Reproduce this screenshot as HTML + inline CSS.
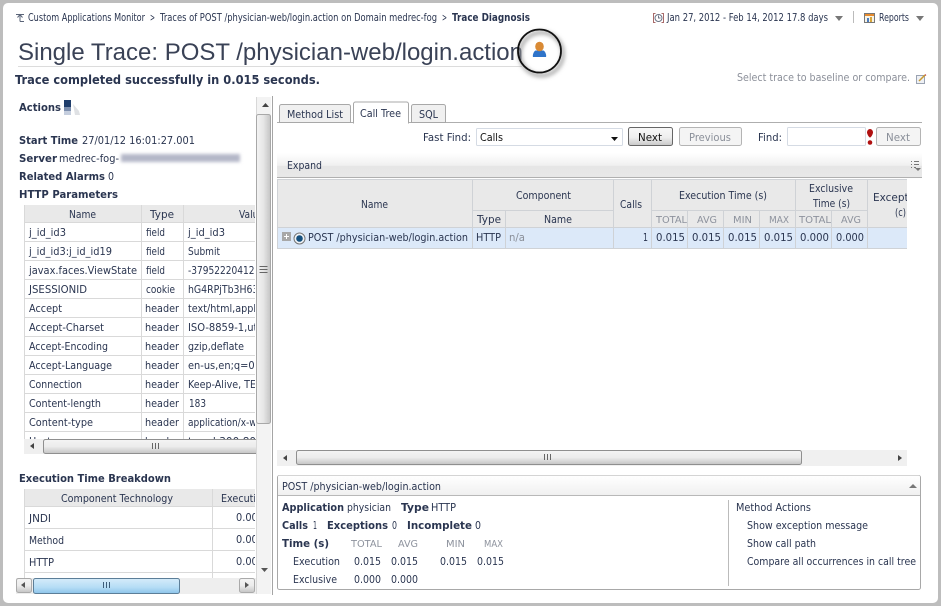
<!DOCTYPE html>
<html><head><meta charset="utf-8"><style>
html,body{margin:0;padding:0;background:#bdbdbd;overflow:hidden}
svg{display:block}
text{font-family:"DejaVu Sans","Liberation Sans",sans-serif;font-size:11px;fill:#2a3550;white-space:pre}
.b{font-weight:bold}
.s{font-size:10px;fill:#8d929d}
.g{fill:#8a8f99}
.c{font-size:10.5px}
</style></head><body>
<svg width="941" height="606" viewBox="0 0 941 606" xmlns="http://www.w3.org/2000/svg">
<defs>
<linearGradient id="bar" x1="0" y1="0" x2="0" y2="1"><stop offset="0" stop-color="#fff"/><stop offset=".5" stop-color="#f0f0f0"/><stop offset=".52" stop-color="#e6e6e6"/><stop offset="1" stop-color="#e8e8e8"/></linearGradient>
<linearGradient id="th" x1="0" y1="0" x2="0" y2="1"><stop offset="0" stop-color="#f4f4f4"/><stop offset=".5" stop-color="#ececec"/><stop offset="1" stop-color="#c4c4c4"/></linearGradient>
<linearGradient id="thv" x1="0" y1="0" x2="1" y2="0"><stop offset="0" stop-color="#f4f4f4"/><stop offset=".5" stop-color="#e6e6e6"/><stop offset="1" stop-color="#c4c4c4"/></linearGradient>
<linearGradient id="blue" x1="0" y1="0" x2="0" y2="1"><stop offset="0" stop-color="#d6ecfa"/><stop offset=".6" stop-color="#b4dcf5"/><stop offset="1" stop-color="#8cc4ea"/></linearGradient>
<linearGradient id="btn" x1="0" y1="0" x2="0" y2="1"><stop offset="0" stop-color="#f8f8f8"/><stop offset=".55" stop-color="#eee"/><stop offset="1" stop-color="#c8c8c8"/></linearGradient>
<linearGradient id="pan" x1="0" y1="0" x2="0" y2="1"><stop offset="0" stop-color="#fff"/><stop offset="1" stop-color="#f0f0f0"/></linearGradient>
<clipPath id="c1"><rect x="24" y="205" width="231" height="234"/></clipPath>
<clipPath id="c2"><rect x="24" y="489" width="231" height="89"/></clipPath>
<clipPath id="c3"><rect x="277" y="179" width="630" height="70"/></clipPath>
<filter id="bl" x="-10%" y="-50%" width="120%" height="200%"><feGaussianBlur stdDeviation="1.6"/></filter>
<filter id="sh" x="-30%" y="-30%" width="160%" height="160%"><feGaussianBlur stdDeviation="2.2"/></filter>
</defs>

<rect width="941" height="606" fill="#bdbdbd"/>
<rect x="3" y="3" width="935" height="600" rx="5" fill="#fff"/>

<!-- breadcrumb -->
<g stroke="#5a6478" fill="none" stroke-width="1"><path d="M16 14.5h8M20 14.5v7M17.5 17.5l2.5-3 2.5 3M20 21.5h4"/></g>
<text x="28" y="21" textLength="117" lengthAdjust="spacingAndGlyphs" class="c">Custom Applications Monitor</text>
<text x="150" y="21" textLength="5" lengthAdjust="spacingAndGlyphs" class="c">&gt;</text>
<text x="160" y="21" textLength="277" lengthAdjust="spacingAndGlyphs" class="c">Traces of POST /physician-web/login.action on Domain medrec-fog</text>
<text x="442" y="21" textLength="5" lengthAdjust="spacingAndGlyphs" class="c">&gt;</text>
<text x="452" y="21" textLength="78" lengthAdjust="spacingAndGlyphs" class="c b">Trace Diagnosis</text>

<!-- date / reports -->
<g fill="none" stroke-width="1"><path d="M655.5 13.5h-2v9h2M661.500 13.500h2v9h-2" stroke="#a86a6a"/><circle cx="658.500" cy="18" r="3.500" stroke="#6b7385"/><path d="M658.500 15.500v2.500h2" stroke="#6b7385"/></g>
<text x="667" y="21" textLength="161" lengthAdjust="spacingAndGlyphs">Jan 27, 2012 - Feb 14, 2012 17.8 days</text>
<path d="M835 16h8l-4 5z" fill="#777"/>
<rect x="853" y="11" width="1" height="12" fill="#bbb"/>
<rect x="864.500" y="13.500" width="10" height="9" fill="#f7f3e6" stroke="#777"/><rect x="865" y="14" width="9" height="2" fill="#e58a2e"/><rect x="867" y="18" width="2" height="4" fill="#4a7cc0"/><rect x="870" y="17" width="2" height="5" fill="#d9a63a"/>
<text x="879" y="21" textLength="30" lengthAdjust="spacingAndGlyphs">Reports</text>
<path d="M916 16h8l-4 5z" fill="#777"/>

<!-- title -->
<text x="18" y="60" textLength="505" lengthAdjust="spacingAndGlyphs" style="font-family:'Liberation Sans',sans-serif;font-size:24px;fill:#3a4256">Single Trace: POST /physician-web/login.action</text>
<rect x="18" y="66" width="504" height="1" fill="#dcdcdc"/>

<!-- circle highlight -->
<circle cx="541.500" cy="54" r="21.500" fill="none" stroke="#999" stroke-width="3" filter="url(#sh)"/>
<circle cx="539.500" cy="51" r="21.500" fill="none" stroke="#111" stroke-width="1.800"/>
<path d="M533 57c-.5-1 0-5 2.500-6.500h8c2.500 1.500 3 5.500 2.500 6.500z" fill="#2f74c9"/>
<ellipse cx="539.500" cy="46.500" rx="4.300" ry="4.800" fill="#d98a35"/>

<text x="15" y="84" textLength="305" lengthAdjust="spacingAndGlyphs" class="b" style="font-size:12.500px">Trace completed successfully in 0.015 seconds.</text>
<text x="737" y="81" textLength="173" lengthAdjust="spacingAndGlyphs" style="fill:#8b8f99">Select trace to baseline or compare.</text>
<rect x="916.500" y="75.500" width="8" height="8" fill="#eef0f4" stroke="#9aa3b2"/><path d="M919 81l6-6" stroke="#c99b2e" stroke-width="1.500"/><path d="M925 74.500l1 1" stroke="#b33" stroke-width="1"/>

<!-- left -->
<text x="19" y="111" textLength="42" lengthAdjust="spacingAndGlyphs" class="b">Actions</text>
<rect x="64" y="100" width="7" height="7" fill="#1f3d6b"/><rect x="64" y="107" width="7" height="4" fill="#7d8fae"/><rect x="64" y="111" width="7" height="4" fill="#c5cede"/><path d="M73 104l6 7 1 4h-5z" fill="#dfe1e4"/>

<text x="19" y="144" textLength="59" lengthAdjust="spacingAndGlyphs" class="b">Start Time</text>
<text x="82" y="144" textLength="113" lengthAdjust="spacingAndGlyphs">27/01/12 16:01:27.001</text>
<text x="19" y="162" textLength="38" lengthAdjust="spacingAndGlyphs" class="b">Server</text>
<text x="59" y="162" textLength="60" lengthAdjust="spacingAndGlyphs">medrec-fog-</text>
<rect x="121" y="154" width="119" height="8" fill="#b4b7c8" filter="url(#bl)"/>
<text x="19" y="180" textLength="86" lengthAdjust="spacingAndGlyphs" class="b">Related Alarms</text>
<text x="108" y="180" textLength="6" lengthAdjust="spacingAndGlyphs">0</text>
<text x="19" y="198" textLength="99" lengthAdjust="spacingAndGlyphs" class="b">HTTP Parameters</text>

<!-- table 1 -->
<g clip-path="url(#c1)">
<rect x="24" y="205" width="231" height="17" fill="#e9e9e9"/>
<g fill="#d9d9d9">
<rect x="24" y="222" width="231" height="1"/><rect x="24" y="241" width="231" height="1"/><rect x="24" y="260" width="231" height="1"/><rect x="24" y="279" width="231" height="1"/><rect x="24" y="298" width="231" height="1"/><rect x="24" y="317" width="231" height="1"/><rect x="24" y="336" width="231" height="1"/><rect x="24" y="355" width="231" height="1"/><rect x="24" y="374" width="231" height="1"/><rect x="24" y="393" width="231" height="1"/><rect x="24" y="412" width="231" height="1"/><rect x="24" y="431" width="231" height="1"/>
<rect x="24" y="205" width="1" height="234"/><rect x="141" y="205" width="1" height="234"/><rect x="183" y="205" width="1" height="234"/>
</g>
<text x="69" y="218" textLength="27" lengthAdjust="spacingAndGlyphs">Name</text><text x="150" y="218" textLength="24" lengthAdjust="spacingAndGlyphs">Type</text><text x="239" y="218" textLength="25" lengthAdjust="spacingAndGlyphs">Value</text>

<text x="29" y="236" textLength="37" lengthAdjust="spacingAndGlyphs">j_id_id3</text><text x="146" y="236" textLength="19" lengthAdjust="spacingAndGlyphs">field</text><text x="188" y="236" textLength="37" lengthAdjust="spacingAndGlyphs">j_id_id3</text>
<text x="29" y="255" textLength="83" lengthAdjust="spacingAndGlyphs">j_id_id3:j_id_id19</text><text x="146" y="255" textLength="19" lengthAdjust="spacingAndGlyphs">field</text><text x="188" y="255" textLength="32" lengthAdjust="spacingAndGlyphs">Submit</text>
<text x="29" y="274" textLength="108" lengthAdjust="spacingAndGlyphs">javax.faces.ViewState</text><text x="146" y="274" textLength="19" lengthAdjust="spacingAndGlyphs">field</text><text x="188" y="274" textLength="78" lengthAdjust="spacingAndGlyphs">-3795222041234</text>
<text x="29" y="293" textLength="58" lengthAdjust="spacingAndGlyphs">JSESSIONID</text><text x="146" y="293" textLength="29" lengthAdjust="spacingAndGlyphs">cookie</text><text x="188" y="293" textLength="76" lengthAdjust="spacingAndGlyphs">hG4RPjTb3H63x</text>
<text x="29" y="312" textLength="33" lengthAdjust="spacingAndGlyphs">Accept</text><text x="145" y="312" textLength="34" lengthAdjust="spacingAndGlyphs">header</text><text x="188" y="312" textLength="76" lengthAdjust="spacingAndGlyphs">text/html,applic</text>
<text x="29" y="331" textLength="75" lengthAdjust="spacingAndGlyphs">Accept-Charset</text><text x="145" y="331" textLength="34" lengthAdjust="spacingAndGlyphs">header</text><text x="188" y="331" textLength="76" lengthAdjust="spacingAndGlyphs">ISO-8859-1,utf-</text>
<text x="29" y="350" textLength="79" lengthAdjust="spacingAndGlyphs">Accept-Encoding</text><text x="145" y="350" textLength="34" lengthAdjust="spacingAndGlyphs">header</text><text x="188" y="350" textLength="56" lengthAdjust="spacingAndGlyphs">gzip,deflate</text>
<text x="29" y="369" textLength="83" lengthAdjust="spacingAndGlyphs">Accept-Language</text><text x="145" y="369" textLength="34" lengthAdjust="spacingAndGlyphs">header</text><text x="188" y="369" textLength="76" lengthAdjust="spacingAndGlyphs">en-us,en;q=0.5</text>
<text x="29" y="388" textLength="53" lengthAdjust="spacingAndGlyphs">Connection</text><text x="145" y="388" textLength="34" lengthAdjust="spacingAndGlyphs">header</text><text x="188" y="388" textLength="68" lengthAdjust="spacingAndGlyphs">Keep-Alive, TE</text>
<text x="29" y="407" textLength="72" lengthAdjust="spacingAndGlyphs">Content-length</text><text x="145" y="407" textLength="34" lengthAdjust="spacingAndGlyphs">header</text><text x="189" y="407" textLength="17" lengthAdjust="spacingAndGlyphs">183</text>
<text x="29" y="426" textLength="64" lengthAdjust="spacingAndGlyphs">Content-type</text><text x="145" y="426" textLength="34" lengthAdjust="spacingAndGlyphs">header</text><text x="188" y="426" textLength="76" lengthAdjust="spacingAndGlyphs">application/x-ww</text>
<text x="29" y="445" textLength="22" lengthAdjust="spacingAndGlyphs">Host</text><text x="145" y="445" textLength="34" lengthAdjust="spacingAndGlyphs">header</text><text x="188" y="445" textLength="68" lengthAdjust="spacingAndGlyphs">trend:300:80</text>
</g>
<!-- table 1 h scrollbar -->
<rect x="24" y="439" width="231" height="15" fill="#efefef"/>
<path d="M34 443v6l-4-3z" fill="#444"/>
<rect x="43.500" y="439.500" width="225" height="14" rx="2" fill="url(#th)" stroke="#8f8f8f"/>
<path d="M152.500 443v6M155.500 443v6M158.500 443v6" stroke="#666"/>

<text x="19" y="482" textLength="152" lengthAdjust="spacingAndGlyphs" class="b">Execution Time Breakdown</text>

<!-- table 2 -->
<g clip-path="url(#c2)">
<rect x="24" y="489" width="231" height="17" fill="#e9e9e9"/>
<g fill="#d9d9d9"><rect x="24" y="506" width="231" height="1"/><rect x="24" y="528" width="231" height="1"/><rect x="24" y="550" width="231" height="1"/><rect x="24" y="572" width="231" height="1"/><rect x="24" y="489" width="1" height="89"/><rect x="212" y="489" width="1" height="89"/></g>
<text x="61" y="502" textLength="112" lengthAdjust="spacingAndGlyphs">Component Technology</text>
<text x="221" y="502" textLength="47" lengthAdjust="spacingAndGlyphs">Execution</text>
<text x="29" y="522" textLength="22" lengthAdjust="spacingAndGlyphs">JNDI</text><text x="236" y="521" textLength="28" lengthAdjust="spacingAndGlyphs">0.000</text>
<text x="29" y="544" textLength="35" lengthAdjust="spacingAndGlyphs">Method</text><text x="236" y="543" textLength="28" lengthAdjust="spacingAndGlyphs">0.000</text>
<text x="29" y="566" textLength="25" lengthAdjust="spacingAndGlyphs">HTTP</text><text x="236" y="565" textLength="28" lengthAdjust="spacingAndGlyphs">0.000</text>
</g>

<!-- left v scrollbar -->
<rect x="256" y="97" width="15" height="497" fill="#f3f3f3"/>
<rect x="256" y="97" width="1" height="497" fill="#d8d8d8"/>
<path d="M262 107h7l-3.500-4z" fill="#444"/>
<rect x="256.500" y="114.500" width="14" height="309" rx="2" fill="url(#thv)" stroke="#a8a8a8"/>
<path d="M259.500 266.500h8M259.500 269.500h8M259.500 272.500h8" stroke="#666"/>
<path d="M261 568h7l-3.500 4z" fill="#555"/>

<!-- left h scrollbar -->
<rect x="16" y="578" width="240" height="16" fill="#eee"/>
<rect x="16.500" y="578.500" width="15" height="14" rx="2" fill="url(#th)" stroke="#aaa"/><path d="M25 582v6l-4-3z" fill="#555"/>
<rect x="33.500" y="578.500" width="146" height="15" rx="2" fill="url(#blue)" stroke="#5c7e98"/>
<path d="M103.500 582v6M106.500 582v6M109.500 582v6" stroke="#3d5c78"/>
<rect x="239.500" y="578.500" width="15" height="14" rx="2" fill="url(#th)" stroke="#aaa"/><path d="M245 582v6l4-3z" fill="#555"/>

<!-- splitter -->
<rect x="272" y="96" width="1" height="499" fill="#a5a5a5"/>

<!-- tabs -->
<rect x="277" y="122" width="645" height="1" fill="#aeaeae"/>
<path d="M279.500 122.500v-16a2 2 0 0 1 2-2h67a2 2 0 0 1 2 2v16z" fill="#f0f0f0" stroke="#a8a8a8"/>
<path d="M411.500 122.500v-16a2 2 0 0 1 2-2h30a2 2 0 0 1 2 2v16z" fill="#f0f0f0" stroke="#a8a8a8"/>
<path d="M353.500 123v-19a2 2 0 0 1 2-2h51a2 2 0 0 1 2 2v19z" fill="#fff" stroke="#a8a8a8"/>
<rect x="354" y="122" width="54" height="2" fill="#fff"/>
<text x="287" y="118" textLength="56" lengthAdjust="spacingAndGlyphs">Method List</text>
<text x="360" y="117" textLength="41" lengthAdjust="spacingAndGlyphs">Call Tree</text>
<text x="419" y="118" textLength="19" lengthAdjust="spacingAndGlyphs">SQL</text>

<!-- find bar -->
<text x="423" y="141" textLength="48" lengthAdjust="spacingAndGlyphs">Fast Find:</text>
<rect x="476.500" y="128.500" width="146" height="17" rx="1" fill="#fff" stroke="#d5dbe4"/>
<text x="480" y="141" textLength="23" lengthAdjust="spacingAndGlyphs" style="fill:#111">Calls</text>
<path d="M611 137h7l-3.500 4z" fill="#111"/>
<rect x="628.500" y="127.500" width="44" height="18" rx="2" fill="url(#btn)" stroke="#666"/>
<text x="638" y="141" textLength="24" lengthAdjust="spacingAndGlyphs" style="fill:#111">Next</text>
<rect x="679.500" y="127.500" width="62" height="18" rx="2" fill="#f4f4f4" stroke="#b4b4b4"/>
<text x="689" y="141" textLength="42" lengthAdjust="spacingAndGlyphs" class="g">Previous</text>
<text x="758" y="141" textLength="24" lengthAdjust="spacingAndGlyphs">Find:</text>
<rect x="787.500" y="127.500" width="78" height="18" rx="1" fill="#fff" stroke="#d5dbe4"/>
<path d="M870 129c2 0 3 2 3 3.500s-2 5-3 5-3-3.500-3-5 1-3.500 3-3.500z" fill="#b01010"/><circle cx="870" cy="142.500" r="2.300" fill="#b01010"/>
<rect x="876.500" y="127.500" width="44" height="18" rx="2" fill="#f4f4f4" stroke="#b4b4b4"/>
<text x="886" y="141" textLength="24" lengthAdjust="spacingAndGlyphs" class="g">Next</text>

<!-- expand bar -->
<rect x="277" y="153" width="645" height="25" fill="url(#bar)"/>
<rect x="277" y="177" width="645" height="1" fill="#b0b0b0"/>
<text x="287" y="169" textLength="35" lengthAdjust="spacingAndGlyphs">Expand</text>
<path d="M911 161.500h1M914 161.500h5M911 164.500h1M914 164.500h5M911 167.500h1M914 167.500h2" stroke="#777"/><path d="M915 168h6l-3 3z" fill="#777"/>

<!-- main table -->
<g clip-path="url(#c3)">
<rect x="277" y="179" width="630" height="49" fill="#e9e9e9"/>
<rect x="277" y="228" width="630" height="20" fill="#dce9f9"/>
<g fill="#cfd2d6">
<rect x="277" y="179" width="630" height="1"/>
<rect x="472" y="210" width="141" height="1"/><rect x="651" y="210" width="216" height="1"/>
<rect x="277" y="227" width="630" height="1"/><rect x="277" y="248" width="630" height="1"/>
<rect x="277" y="179" width="1" height="70"/><rect x="472" y="179" width="1" height="70"/><rect x="505" y="210" width="1" height="39"/><rect x="613" y="179" width="1" height="70"/><rect x="651" y="179" width="1" height="70"/><rect x="687" y="210" width="1" height="39"/><rect x="723" y="210" width="1" height="39"/><rect x="759" y="210" width="1" height="39"/><rect x="795" y="179" width="1" height="70"/><rect x="831" y="210" width="1" height="39"/><rect x="867" y="179" width="1" height="70"/>
</g>
<text x="361" y="208" textLength="27" lengthAdjust="spacingAndGlyphs">Name</text>
<text x="516" y="199" textLength="55" lengthAdjust="spacingAndGlyphs">Component</text>
<text x="477" y="223" textLength="24" lengthAdjust="spacingAndGlyphs">Type</text>
<text x="544" y="223" textLength="28" lengthAdjust="spacingAndGlyphs">Name</text>
<text x="620" y="208" textLength="22" lengthAdjust="spacingAndGlyphs">Calls</text>
<text x="679" y="199" textLength="88" lengthAdjust="spacingAndGlyphs">Execution Time (s)</text>
<text x="809" y="192" textLength="44" lengthAdjust="spacingAndGlyphs">Exclusive</text>
<text x="813" y="207" textLength="37" lengthAdjust="spacingAndGlyphs">Time (s)</text>
<text x="873" y="201" textLength="57" lengthAdjust="spacingAndGlyphs">Exceptions</text>
<text x="895" y="216" textLength="11" lengthAdjust="spacingAndGlyphs">(c)</text>
<text x="656" y="223" textLength="31" lengthAdjust="spacingAndGlyphs" class="s">TOTAL</text>
<text x="697" y="223" textLength="20" lengthAdjust="spacingAndGlyphs" class="s">AVG</text>
<text x="733" y="223" textLength="19" lengthAdjust="spacingAndGlyphs" class="s">MIN</text>
<text x="769" y="223" textLength="20" lengthAdjust="spacingAndGlyphs" class="s">MAX</text>
<text x="799" y="223" textLength="32" lengthAdjust="spacingAndGlyphs" class="s">TOTAL</text>
<text x="841" y="223" textLength="20" lengthAdjust="spacingAndGlyphs" class="s">AVG</text>

<rect x="282" y="232" width="9" height="9" fill="#a8a8a8"/><path d="M284 236.500h5M286.500 234v5" stroke="#fff"/>
<circle cx="299.500" cy="238.500" r="5.500" fill="#eef2f6" stroke="#777"/><circle cx="299.500" cy="238.500" r="3.300" fill="#14507f"/>
<text x="308" y="241" textLength="160" lengthAdjust="spacingAndGlyphs">POST /physician-web/login.action</text>
<text x="476" y="241" textLength="25" lengthAdjust="spacingAndGlyphs">HTTP</text>
<text x="509" y="241" textLength="16" lengthAdjust="spacingAndGlyphs" class="g">n/a</text>
<text x="643" y="241" textLength="5" lengthAdjust="spacingAndGlyphs">1</text>
<text x="656" y="241" textLength="29" lengthAdjust="spacingAndGlyphs">0.015</text>
<text x="692" y="241" textLength="29" lengthAdjust="spacingAndGlyphs">0.015</text>
<text x="728" y="241" textLength="29" lengthAdjust="spacingAndGlyphs">0.015</text>
<text x="764" y="241" textLength="29" lengthAdjust="spacingAndGlyphs">0.015</text>
<text x="800" y="241" textLength="29" lengthAdjust="spacingAndGlyphs">0.000</text>
<text x="836" y="241" textLength="28" lengthAdjust="spacingAndGlyphs">0.000</text>
</g>

<!-- main h scrollbar -->
<rect x="277" y="450" width="630" height="16" fill="#f0f0f0"/>
<path d="M287 455v6l-4-3z" fill="#444"/>
<rect x="296.500" y="450.500" width="505" height="14" rx="2" fill="url(#th)" stroke="#8f8f8f"/>
<path d="M544.500 454v6M547.500 454v6M550.500 454v6" stroke="#666"/>
<path d="M898 455v6l4-3z" fill="#444"/>

<!-- bottom panel -->
<rect x="277.500" y="475.500" width="643" height="114" rx="2" fill="#fff" stroke="#a8a8a8"/>
<path d="M278 495v-18a1.500 1.500 0 0 1 1.500-1.500h639a1.500 1.500 0 0 1 1.500 1.500v18z" fill="url(#pan)"/>
<rect x="278" y="495" width="642" height="1" fill="#b8b8b8"/>
<text x="282" y="490" textLength="159" lengthAdjust="spacingAndGlyphs">POST /physician-web/login.action</text>
<path d="M909 488h8l-4-4z" fill="#777"/>
<text x="282" y="511" textLength="62" lengthAdjust="spacingAndGlyphs" class="b">Application</text>
<text x="347" y="511" textLength="44" lengthAdjust="spacingAndGlyphs">physician</text>
<text x="401" y="511" textLength="28" lengthAdjust="spacingAndGlyphs" class="b">Type</text>
<text x="431" y="511" textLength="25" lengthAdjust="spacingAndGlyphs">HTTP</text>
<text x="282" y="529" textLength="26" lengthAdjust="spacingAndGlyphs" class="b">Calls</text>
<text x="313" y="529" textLength="4" lengthAdjust="spacingAndGlyphs">1</text>
<text x="327" y="529" textLength="61" lengthAdjust="spacingAndGlyphs" class="b">Exceptions</text>
<text x="392" y="529" textLength="5" lengthAdjust="spacingAndGlyphs">0</text>
<text x="407" y="529" textLength="65" lengthAdjust="spacingAndGlyphs" class="b">Incomplete</text>
<text x="475" y="529" textLength="6" lengthAdjust="spacingAndGlyphs">0</text>
<text x="282" y="547" textLength="47" lengthAdjust="spacingAndGlyphs" class="b">Time (s)</text>
<text x="351" y="547" textLength="31" lengthAdjust="spacingAndGlyphs" class="s">TOTAL</text>
<text x="398" y="547" textLength="20" lengthAdjust="spacingAndGlyphs" class="s">AVG</text>
<text x="446" y="547" textLength="19" lengthAdjust="spacingAndGlyphs" class="s">MIN</text>
<text x="484" y="547" textLength="19" lengthAdjust="spacingAndGlyphs" class="s">MAX</text>
<text x="293" y="565" textLength="47" lengthAdjust="spacingAndGlyphs">Execution</text>
<text x="354" y="565" textLength="27" lengthAdjust="spacingAndGlyphs">0.015</text>
<text x="391" y="565" textLength="27" lengthAdjust="spacingAndGlyphs">0.015</text>
<text x="440" y="565" textLength="27" lengthAdjust="spacingAndGlyphs">0.015</text>
<text x="477" y="565" textLength="27" lengthAdjust="spacingAndGlyphs">0.015</text>
<text x="293" y="583" textLength="44" lengthAdjust="spacingAndGlyphs">Exclusive</text>
<text x="354" y="583" textLength="27" lengthAdjust="spacingAndGlyphs">0.000</text>
<text x="391" y="583" textLength="27" lengthAdjust="spacingAndGlyphs">0.000</text>
<rect x="728" y="500" width="1" height="86" fill="#bbb"/>
<text x="736" y="511" textLength="75" lengthAdjust="spacingAndGlyphs">Method Actions</text>
<text x="747" y="529" textLength="121" lengthAdjust="spacingAndGlyphs">Show exception message</text>
<text x="747" y="547" textLength="69" lengthAdjust="spacingAndGlyphs">Show call path</text>
<text x="747" y="565" textLength="169" lengthAdjust="spacingAndGlyphs">Compare all occurrences in call tree</text>
</svg>
</body></html>
